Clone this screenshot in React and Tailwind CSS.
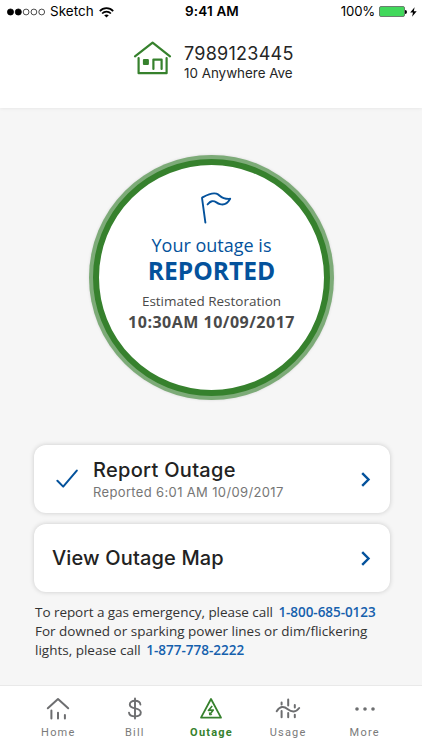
import clsx from 'clsx'

function WifiIcon() {
  return (
    <svg width="15" height="11" viewBox="0 0 15 11" fill="none" stroke="#000" strokeWidth="1.7">
      <path d="M0.8 4.1C4.5 0.2 10.5 0.2 14.2 4.1" />
      <path d="M3.1 6.5C5.6 4 9.4 4 11.9 6.5" />
      <path d="M7.5 10.6L5.2 8.3C6.5 7.2 8.5 7.2 9.8 8.3Z" fill="#000" stroke="none" />
    </svg>
  )
}

function BoltIcon() {
  return (
    <svg width="7" height="10" viewBox="0 0 7 10" fill="#000">
      <path d="M4.6 0.2L0.2 5.6H3L2.1 9.8L6.7 4.2H3.8Z" />
    </svg>
  )
}

function HouseIcon() {
  return (
    <svg width="39" height="36" viewBox="0 0 39 36" fill="none" stroke="#36812d" strokeWidth="2.2" strokeLinecap="round" strokeLinejoin="round">
      <path d="M2 16.3L19.6 2.6L37 16.3" />
      <path d="M5.6 18V33.2H33.6V18" />
      <path d="M20.4 29V19.6H28.6V29" />
      <rect x="11" y="20" width="3.8" height="4" fill="#36812d" />
    </svg>
  )
}

function FlagIcon() {
  return (
    <svg width="32" height="34" viewBox="0 0 32 34" fill="none" stroke="#04529c" strokeWidth="1.9" strokeLinecap="round" strokeLinejoin="round">
      <path d="M5.4 31.6L2 6.8C6.2 4.4 11 1.2 16.4 2.6C20.8 4 20 8.4 30.2 7.8C27.6 12.4 24 14.4 20 13.2C16 12 15.6 9.6 12 10.2C9.6 10.6 8.8 12.2 7.6 13.4" />
    </svg>
  )
}

function CheckIcon() {
  return (
    <svg width="23" height="20" viewBox="0 0 23 20" fill="none" stroke="#04529c" strokeWidth="2" strokeLinecap="round" strokeLinejoin="round">
      <path d="M1.4 11.8L7.2 17.6L20.8 1.6" />
    </svg>
  )
}

function Chevron() {
  return (
    <svg className="mt-[1px]" width="10" height="15" viewBox="0 0 10 15" fill="none" stroke="#04529c" strokeWidth="2.4">
      <path d="M1.2 1.2L7.5 7.5L1.2 13.8" />
    </svg>
  )
}

function HomeTabIcon() {
  return (
    <svg width="24" height="24" viewBox="0 0 24 24" fill="none" stroke="#6d6e70" strokeWidth="2" strokeLinecap="round" strokeLinejoin="round">
      <path d="M1.8 11.3L12 2L22.2 11.3" />
      <path d="M5.4 13.6V21.4M12 15.8V21.4M18.9 18V21.4" />
    </svg>
  )
}

function BillTabIcon() {
  return (
    <svg width="24" height="24" viewBox="0 0 24 24" fill="none" stroke="#6d6e70" strokeWidth="1.9" strokeLinecap="round">
      <path d="M12 1.4V21.6" />
      <path d="M17.4 7.5C17.1 5.1 15 3.8 12 3.8C9 3.8 6.8 5.2 6.8 7.5C6.8 10 9 10.8 12 11.4C15.2 12.1 17.8 13 17.8 15.6C17.8 18.1 15.4 19.4 12 19.4C8.6 19.4 6.3 18.1 6 15.6" />
    </svg>
  )
}

function OutageTabIcon() {
  return (
    <svg width="24" height="24" viewBox="0 0 24 24" fill="none" stroke="#36812d" strokeWidth="1.8" strokeLinejoin="round">
      <path d="M12 2L22 20.6H2Z" />
      <path d="M13.2 9L9.4 13.4L14.3 13L10.8 17.6" strokeWidth="1.6" />
      <path d="M10.3 15.3L10.6 18L13.1 17.5" strokeWidth="1" />
    </svg>
  )
}

function UsageTabIcon() {
  return (
    <svg width="26" height="24" viewBox="0 0 26 24" fill="none" stroke="#6d6e70" strokeWidth="2" strokeLinecap="round">
      <path d="M1.7 14.2C5 9 8.7 9 12.8 12.2C16.8 15.4 21 15.4 24.2 11" />
      <path d="M6.6 5.4V7.4M6.6 14V20.2M13.2 2.4V8.4M13.2 16V20.2M19.8 8V10.4M19.8 17.8V20.2" />
    </svg>
  )
}

function MoreTabIcon() {
  return (
    <svg width="24" height="24" viewBox="0 0 24 24" fill="#6d6e70">
      <circle cx="4" cy="12" r="1.8" />
      <circle cx="12" cy="12" r="1.8" />
      <circle cx="20" cy="12" r="1.8" />
    </svg>
  )
}

const tabs = [
  { label: 'Home', Icon: HomeTabIcon },
  { label: 'Bill', Icon: BillTabIcon },
  { label: 'Outage', Icon: OutageTabIcon, active: true },
  { label: 'Usage', Icon: UsageTabIcon },
  { label: 'More', Icon: MoreTabIcon },
]

// carrier signal: two of five bars
function Signal() {
  return (
    <svg className="mr-[5px]" width="38" height="8" viewBox="0 0 38 8" stroke="#000" strokeWidth="0.7">
      <circle cx="3.5" cy="4" r="3.1" />
      <circle cx="11.3" cy="4" r="3.1" />
      <circle cx="19.1" cy="4" r="2.9" fill="none" />
      <circle cx="26.9" cy="4" r="2.9" fill="none" />
      <circle cx="34.7" cy="4" r="2.9" fill="none" />
    </svg>
  )
}

function StatusBar() {
  return (
    <div className="grid h-[24px] grid-cols-3 items-center pl-[7px] pr-[5px] text-[13.5px] leading-none text-black">
      <div className="flex items-center">
        <Signal />
        <span className="mr-[5px]">Sketch</span>
        <WifiIcon />
      </div>
      <div className="text-center font-semibold tracking-[0.15px]">9:41 AM</div>
      <div className="flex items-center justify-end">
        <span className="mr-[4px] text-[13.2px] tracking-[-0.2px]">100%</span>
        <span className="h-[11px] w-[26px] rounded-[2px] border border-[#6b7f6f] bg-[#41d85b]" />
        <span className="mr-[3px] h-[4px] w-[2px] rounded-r-full bg-black" />
        <BoltIcon />
      </div>
    </div>
  )
}

function Card({ children }) {
  return (
    <div className="flex h-[68px] items-center justify-between rounded-[12px] bg-white pr-[19px] shadow-[0_0_5px_rgba(0,0,0,0.18)]">
      {children}
      <Chevron />
    </div>
  )
}

export default function App() {
  return (
    <div className="flex h-[750px] w-[422px] flex-col overflow-hidden bg-[#f6f6f6] font-['Inter',sans-serif] whitespace-nowrap">
      <header className="h-[108px] shrink-0 bg-white shadow-[0_0_4px_rgba(0,0,0,0.09)]">
        <StatusBar />
        <div className="flex pt-[16px] pl-[133px]">
          <HouseIcon />
          <div className="pt-[3px] pl-[12px] text-[#252525]">
            <p className="text-[18px] leading-[21px] tracking-[0.25px]">7989123445</p>
            <p className="text-[13.4px] leading-[18px]">10 Anywhere Ave</p>
          </div>
        </div>
      </header>

      <main className="flex flex-1 flex-col px-[34px] pt-[47px]">
        {/* Outage status */}
        <div className="ml-[55px] size-[245px] rounded-full bg-[#7dab78] p-[4px] shadow-[0_0_3px_rgba(0,0,0,0.12)]">
          <div className="flex size-full flex-col items-center rounded-full border-[6px] border-[#36812d] bg-white pt-[26px] font-['Open_Sans',sans-serif]">
            <div className="pl-[9px]">
              <FlagIcon />
            </div>
            <p className="mt-[8px] text-[18px] leading-[24px] text-[#04529c]">Your outage is</p>
            <p className="text-[24.6px] leading-[27px] font-bold text-[#04529c]">REPORTED</p>
            <p className="mt-[7px] text-[13.5px] leading-[20px] text-[#4a4a4a]">Estimated Restoration</p>
            <p className="text-[16px] leading-[22px] font-bold tracking-[0.5px] text-[#4a4a4a]">10:30AM 10/09/2017</p>
          </div>
        </div>

        <div className="mt-[45px] flex w-[356px] flex-col gap-[11px]">
          <Card>
            <div className="flex flex-1 items-center pl-[22px]">
              <CheckIcon />
              <div className="pl-[14px]">
                <p className="text-[20px] leading-[26px] font-medium tracking-[0.3px] text-[#222]">Report Outage</p>
                <p className="text-[13px] leading-[18px] tracking-[0.35px] text-[#767676]">Reported 6:01 AM 10/09/2017</p>
              </div>
            </div>
          </Card>
          <Card>
            <p className="pl-[18px] text-[20px] font-medium tracking-[0.15px] text-[#222]">View Outage Map</p>
          </Card>
        </div>

        <div className="mt-[11px] pl-[1px] font-['Open_Sans',sans-serif] text-[13.5px] leading-[19px] text-[#333]">
          <p className="tracking-[-0.05px]">To report a gas emergency, please call <span className="pl-[2px] font-semibold text-[#1560ad]">1-800-685-0123</span></p>
          <p>For downed or sparking power lines or dim/flickering</p>
          <p>lights, please call <span className="pl-[2px] font-semibold text-[#1560ad]">1-877-778-2222</span></p>
        </div>
      </main>

      <nav className="grid h-[65px] shrink-0 grid-cols-5 border-t border-[#e9e9e9] bg-white pt-[11px] pr-[19px] pl-[20px] font-['Roboto',sans-serif] text-[11px] tracking-[1.2px]">
        {tabs.map(({ label, Icon, active }) => (
          <div key={label} className={clsx('flex flex-col items-center', active ? 'font-bold text-[#36812d]' : 'text-[#7a7a7a]')}>
            <Icon />
            <span className="mt-[4px] leading-[16px]">{label}</span>
          </div>
        ))}
      </nav>
    </div>
  )
}
